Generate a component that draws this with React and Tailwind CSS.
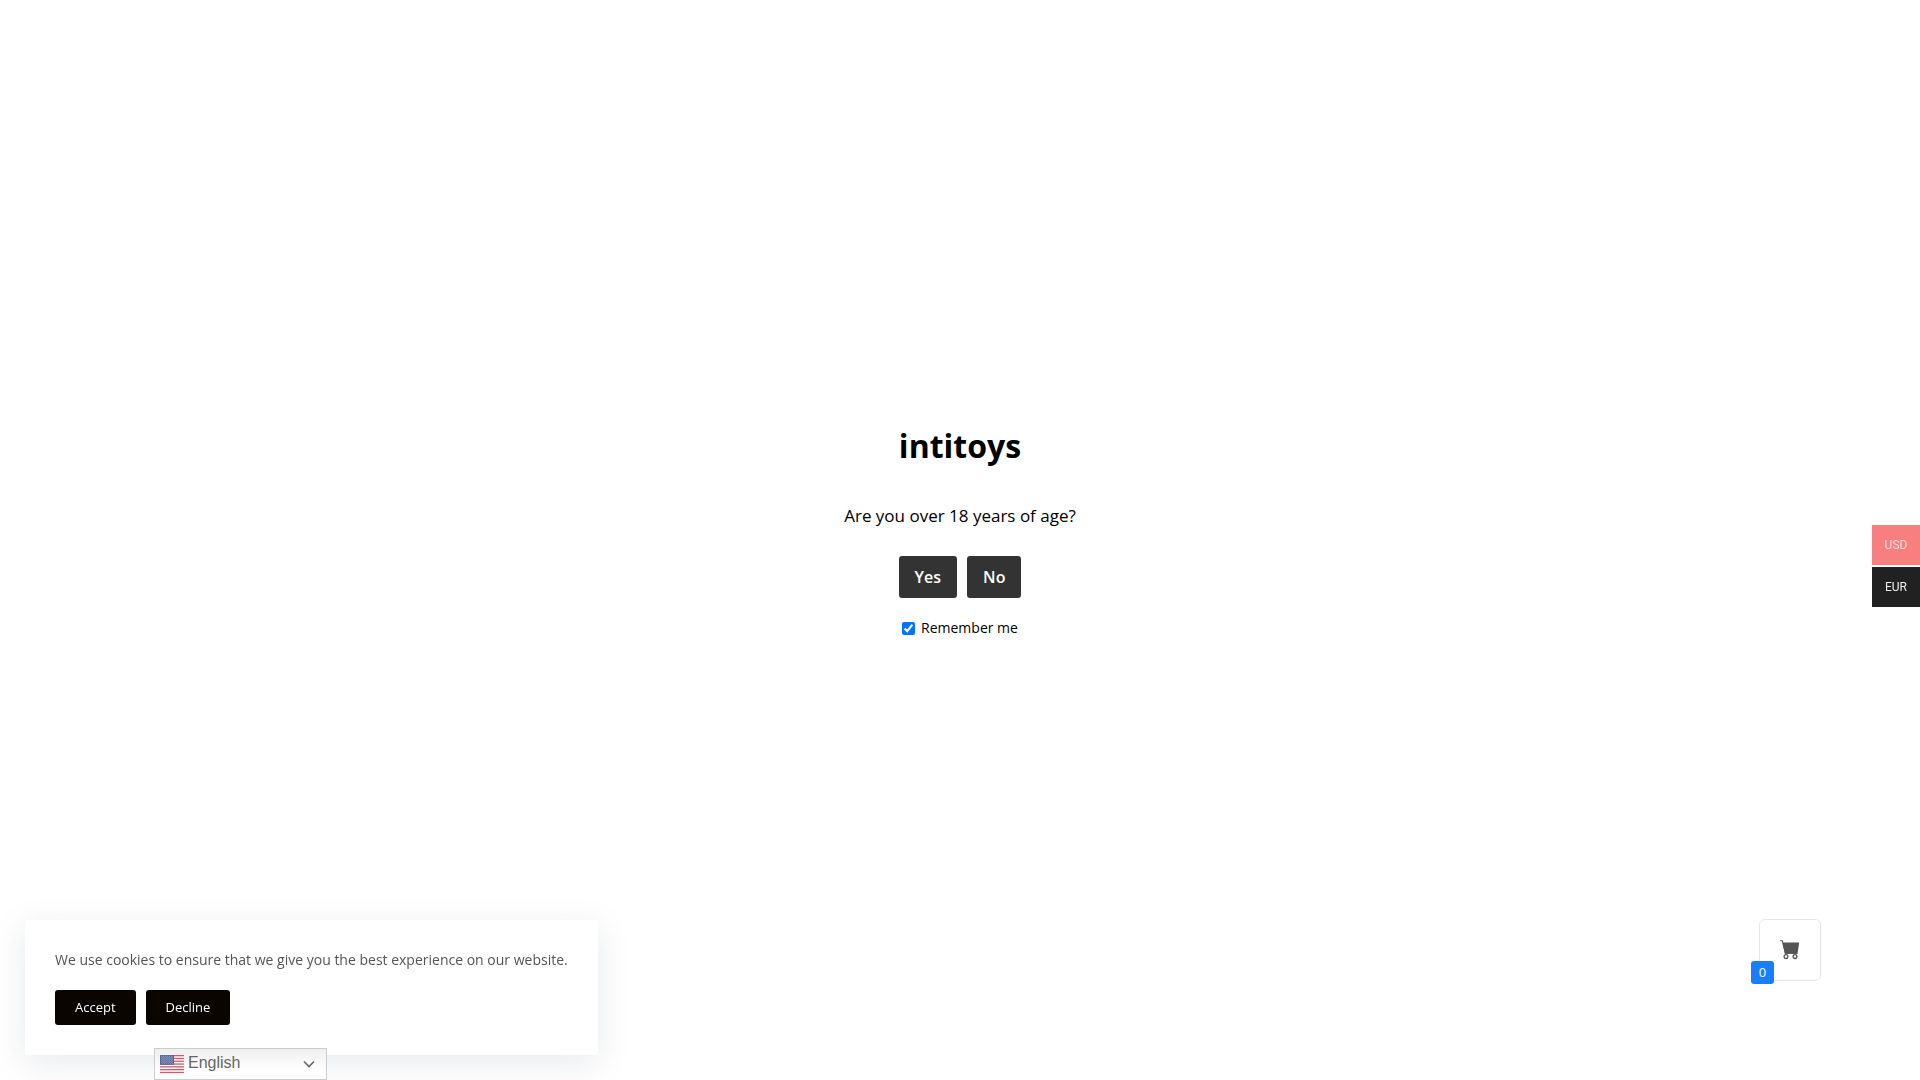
import React, { useState } from "react";

const currencies = [
	{ code: "USD", style: "bg-[#f77f7f] text-[#fcdada]" },
	{ code: "EUR", style: "bg-[#212121] text-[#eeeeee]" },
];

const AgeGate = () => {
	const [remember, setRemember] = useState(true);

	return (
		<main className="flex min-h-screen flex-col items-center justify-center pb-5 text-center text-black">
			<h1 className="text-[32px] leading-12 font-bold">intitoys</h1>
			<p className="mt-8 text-[17px] leading-7">Are you over 18 years of age?</p>

			<div className="mt-[26px] flex gap-[10px]">
				<button className="h-[42px] rounded-[3px] bg-[#333333] px-4 text-base font-semibold text-white">Yes</button>
				<button className="h-[42px] rounded-[3px] bg-[#333333] px-4 text-base font-semibold text-white">No</button>
			</div>

			<label className="mt-5 flex items-center gap-[6px] text-sm leading-5">
				<input
					type="checkbox"
					className="h-[13px] w-[13px]"
					checked={remember}
					onChange={(e) => setRemember(e.target.checked)}
				/>
				Remember me
			</label>
		</main>
	);
};

const CurrencySwitcher = () => (
	<nav className="fixed top-[525px] right-0 flex flex-col gap-[2px]">
		{currencies.map(({ code, style }) => (
			<a
				key={code}
				href="#"
				className={`flex h-10 w-12 items-center justify-center font-['Roboto',sans-serif] text-xs ${style}`}
			>
				{code}
			</a>
		))}
	</nav>
);

const CookieNotice = () => (
	<section className="fixed bottom-[25px] left-[25px] rounded-[3px] bg-white p-[30px] shadow-[0_8px_36px_rgba(7,36,56,0.1)]">
		<p className="text-sm leading-5 text-[#555555]">
			We use cookies to ensure that we give you the best experience on our website.
		</p>
		<div className="mt-5 flex gap-[10px]">
			<button className="h-[35px] rounded-[3px] bg-[#0a0500] px-5 text-[13px] font-medium text-white">Accept</button>
			<button className="h-[35px] rounded-[3px] bg-[#0a0500] px-5 text-[13px] font-medium text-white">Decline</button>
		</div>
	</section>
);

const UsFlag = () => (
	<svg className="h-6 w-6 shrink-0 opacity-80" viewBox="0 0 24 24">
		<rect y="3" width="24" height="18" fill="#fff" />
		{[3, 5.8, 8.6, 11.4, 14.2, 17, 19.8].map((y) => (
			<rect key={y} y={y} width="24" height="1.3" fill="#c8303f" />
		))}
		<rect y="3" width="14" height="9.8" fill="#2b4380" />
		{[4.2, 6.2, 8.2, 10.2].map((y) => (
			<path key={y} d={`M1 ${y}h12M2 ${y + 1}h11`} stroke="#b6c0d8" strokeWidth="0.7" strokeDasharray="0.8 1.2" />
		))}
	</svg>
);

// Language picker, docked to the bottom edge
const LanguageSelect = () => (
	<div className="fixed bottom-0 left-[154px] flex h-8 w-[173px] items-center border border-[#cccccc] bg-linear-to-b from-[#efefef] to-white to-70% px-[5px] text-[#666666]">
		<UsFlag />
		<select
			aria-label="Language"
			className="mb-[2px] ml-1 grow appearance-none bg-transparent font-['Liberation_Sans',sans-serif] text-base leading-6 outline-none"
		>
			<option>English</option>
		</select>
		<svg className="pointer-events-none absolute right-[11px] h-3 w-3" viewBox="0 0 12 12" fill="none" stroke="#666" strokeWidth="1.6">
			<path d="M1 3.5l5 5 5-5" />
		</svg>
	</div>
);

const CartButton = () => (
	<button
		aria-label="Cart"
		className="fixed right-[99px] bottom-[99px] flex h-[62px] w-[62px] items-center justify-center rounded-md border border-[#e6e6e6] bg-white"
	>
		<svg className="h-5 w-5" viewBox="0 0 20 20" fill="none">
			<path d="M2.4 2.4h16.8l-1.7 11.4H5z" fill="#555" />
			<path d="M.1.7h2.2l3 12.6h12" stroke="#555" strokeWidth="1.1" />
			<circle cx="6" cy="16.6" r="1.9" fill="#fff" stroke="#555" strokeWidth="1.3" />
			<circle cx="15" cy="16.6" r="1.9" fill="#fff" stroke="#555" strokeWidth="1.3" />
		</svg>
		<span className="absolute -bottom-1 -left-[9px] flex h-[23px] w-[23px] items-center justify-center rounded-[3px] bg-[#1a7efb] text-[13px] text-white">
			0
		</span>
	</button>
);

export default function App() {
	return (
		<div className="min-h-screen bg-white font-['Open_Sans',sans-serif]">
			<AgeGate />
			<CurrencySwitcher />
			<CartButton />
			<CookieNotice />
			<LanguageSelect />
		</div>
	);
}
